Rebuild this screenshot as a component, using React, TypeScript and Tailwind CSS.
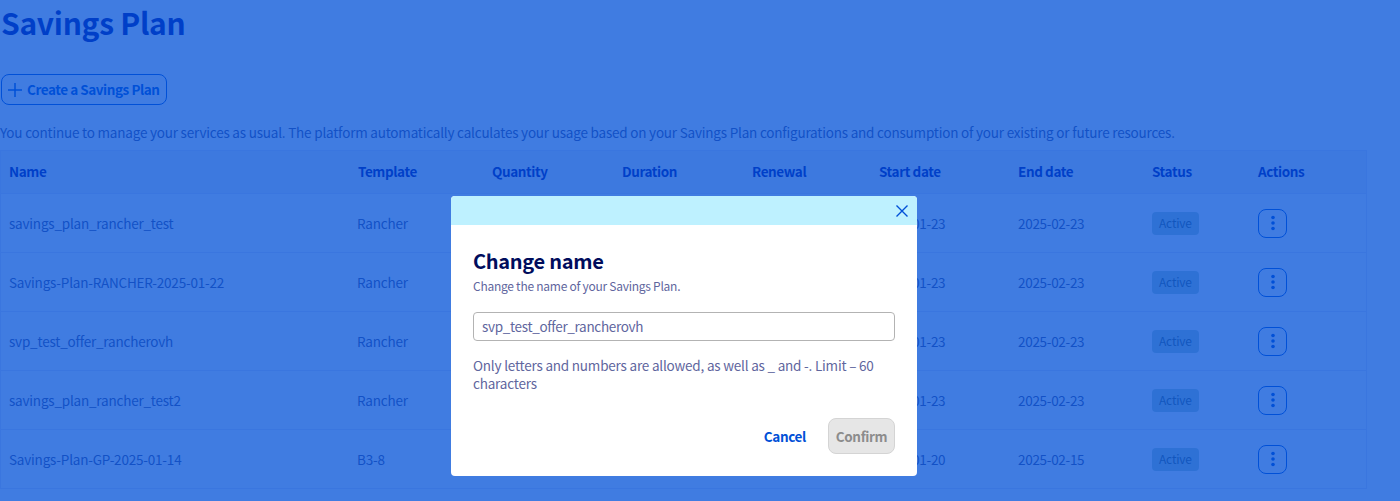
import React from "react";

const font = { fontFamily: '"Noto Sans CJK SC", "Noto Sans", sans-serif' };

const rows = [
  ["savings_plan_rancher_test", "Rancher", "2025-01-23", "2025-02-23"],
  ["Savings-Plan-RANCHER-2025-01-22", "Rancher", "2025-01-23", "2025-02-23"],
  ["svp_test_offer_rancherovh", "Rancher", "2025-01-23", "2025-02-23"],
  ["savings_plan_rancher_test2", "Rancher", "2025-01-23", "2025-02-23"],
  ["Savings-Plan-GP-2025-01-14", "B3-8", "2025-01-20", "2025-02-15"],
];

const headers = ["Name", "Template", "Quantity", "Duration", "Renewal", "Start date", "End date", "Status", "Actions"];
const cols = "grid grid-cols-[349px_135px_130px_130px_127px_139px_134px_106px_117px]";

export default function App() {
  return (
    <div style={font} className="relative h-[501px] w-[1400px] overflow-hidden bg-white">
      <div className="flex flex-col">
        <h1 className="h-[74px] pl-[1px] text-[30px] font-semibold leading-[44px] tracking-[-0.3px] text-[#000e9c]">Savings Plan</h1>
        <div className="flex pl-[1px]">
          <button className="flex h-[31px] w-[166px] items-center gap-[4px] whitespace-nowrap rounded-lg border border-[#0050d7] pl-[5px] text-[13.5px] font-semibold tracking-[-0.45px] text-[#0050d7]">
            <svg width="16" height="16" viewBox="0 0 16 16" fill="none" stroke="currentColor" strokeWidth="1.5">
              <path d="M8 1v14M1 8h14" />
            </svg>
            Create a Savings Plan
          </button>
        </div>
        <p className="mt-[17px] h-[28px] whitespace-nowrap text-[13.5px] leading-[20px] tracking-[-0.2px] text-[#4d5693]">
          You continue to manage your services as usual. The platform automatically calculates your usage based on your Savings Plan configurations and consumption of your existing or future resources.
        </p>
        <div className="w-[1367px] text-[13.5px] tracking-[-0.2px]">
          <div className={`${cols} h-[44px] items-center border border-[#e6e8f5] bg-[#f2f2f8] pb-[2px] font-semibold tracking-[-0.4px] text-[#000e9c]`}>
            {headers.map((h, i) => (
              <div key={h} className={i < 2 ? "pl-[8px]" : "pl-[7px]"}>{h}</div>
            ))}
          </div>
          {rows.map((r) => (
            <div key={r[0]} className={`${cols} h-[59px] items-center border-x border-b border-[#e6e8f5] text-[#4d5693]`}>
              <div className="pl-[8px]">{r[0]}</div>
              <div className="pl-[7px]">{r[1]}</div>
              <div />
              <div />
              <div />
              <div className="pl-[7px] tracking-[-0.3px]">{r[2]}</div>
              <div className="pl-[7px] tracking-[-0.3px]">{r[3]}</div>
              <div className="pl-[7px]">
                <span className="inline-block rounded bg-[#b8d4d0] px-[7px] pb-[3px] pt-[1px] text-[12px] leading-[19px] text-[#4a6a70]">Active</span>
              </div>
              <div className="pl-[7px]">
                <button className="flex h-[29px] w-[29px] items-center justify-center rounded-lg border border-[#0050d7] text-[#0050d7]">
                  <svg width="4" height="16" viewBox="0 0 4 16" fill="currentColor">
                    <circle cx="2" cy="2.5" r="1.8" />
                    <circle cx="2" cy="8" r="1.8" />
                    <circle cx="2" cy="13.5" r="1.8" />
                  </svg>
                </button>
              </div>
            </div>
          ))}
        </div>
      </div>

      <div className="absolute inset-0 bg-[#0050d7]/75" />

      <div className="absolute left-[451px] top-[196px] w-[466px] overflow-hidden rounded bg-white">
        <div className="flex h-[29px] items-center justify-end bg-[#bef1ff] pr-[8px] text-[#0050d7]">
          <svg width="14" height="14" viewBox="0 0 14 14" fill="none" stroke="currentColor" strokeWidth="1.4">
            <path d="M1.5 1.5l11 11M12.5 1.5l-11 11" />
          </svg>
        </div>
        <div className="flex flex-col px-[22px]">
          <h2 className="mt-[22px] text-[20px] font-bold leading-[28px] tracking-[-0.3px] text-[#000d5c]">Change name</h2>
          <p className="mt-[1px] text-[12px] leading-[19px] tracking-[-0.26px] text-[#5f669e]">Change the name of your Savings Plan.</p>
          <div className="mt-[17px] flex h-[29px] items-center rounded border border-[#b3b3b3] pl-[8px] text-[13.5px] tracking-[-0.32px] text-[#5f669e]">
            svp_test_offer_rancherovh
          </div>
          <p className="mt-[15px] text-[13.5px] leading-[18px] tracking-[-0.2px] text-[#5f669e]">
            Only letters and numbers are allowed, as well as _ and -. Limit – 60 characters
          </p>
          <div className="mb-[22px] mt-[26px] flex items-center justify-end gap-[22px]">
            <button className="text-[13.5px] font-semibold tracking-[-0.35px] text-[#0050d7]">Cancel</button>
            <button className="h-[36px] w-[67px] rounded-lg border border-[#d4d4d4] bg-[#e6e6e6] text-[13.5px] font-semibold tracking-[-0.35px] text-[#8c8c8c]">Confirm</button>
          </div>
        </div>
      </div>
    </div>
  );
}
